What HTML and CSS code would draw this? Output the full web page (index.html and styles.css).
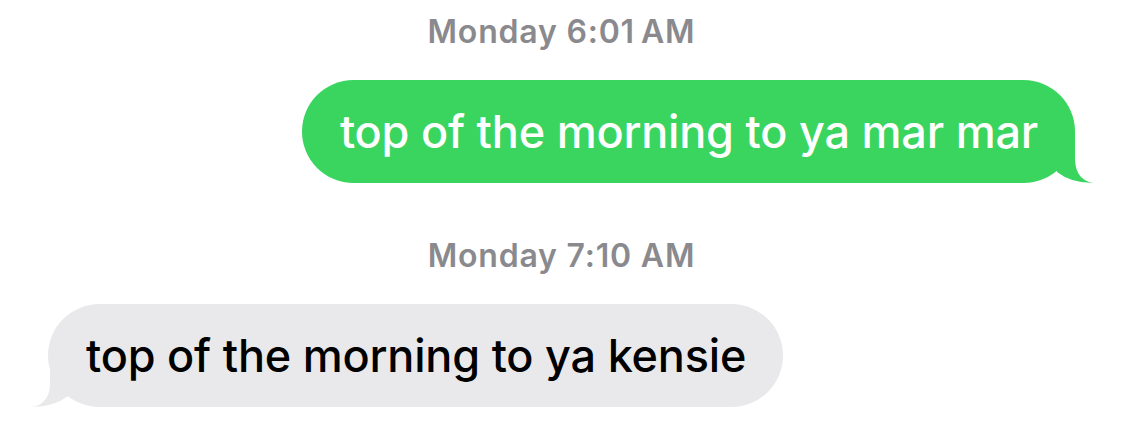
FILE: index.html
```html
<!DOCTYPE html>
<html lang="en">
  <head>
    <meta charset="UTF-8">
    <meta name="viewport" content="width=device-width, initial-scale=1.0">
    <title>Messages</title>
    <link rel="stylesheet" href="styles.css">
  </head>
  <body>
    <div class="thread">
      <div class="stamp">Monday 6:01&#8201;AM</div>
      <div class="row sent">
        <div class="bubble">top of the morning to ya mar mar</div>
      </div>
      <div class="stamp second">Monday 7:10 AM</div>
      <div class="row received">
        <div class="bubble">top of the morning to ya kensie</div>
      </div>
    </div>
  </body>
</html>
```

FILE: styles.css
```css
* {
  box-sizing: border-box;
  margin: 0;
  padding: 0;
}

html, body {
  height: 100%;
  background: #fff;
  overflow: hidden;
}

body {
  font-family: Inter, "Noto Sans", sans-serif;
}

.thread {
  display: flex;
  flex-direction: column;
  padding: 0 50px 0 48px;
}

.stamp {
  color: #8a8a8e;
  font-size: 32px;
  font-weight: 600;
  letter-spacing: 0.8px;
  text-align: center;
  line-height: 64px;
  height: 80px;
}

.stamp.second {
  margin-top: 42px;
  height: 79px;
  line-height: 32px;
  padding-top: 15px;
}

.row {
  display: flex;
}

.row.sent {
  justify-content: flex-end;
}

.bubble {
  position: relative;
  font-size: 45px;
  font-weight: 500;
  line-height: 51px;
  padding: 26px 37px 26px 38px;
  border-radius: 52px;
  letter-spacing: -0.2px;
}

.sent .bubble {
  background: #39d55f;
  color: #fff;
}

.received .bubble {
  background: #e9e9eb;
  color: #000;
}

/* tails */
.bubble::after {
  content: "";
  position: absolute;
  bottom: 0;
  width: 40px;
  height: 52px;
}

.sent .bubble::after {
  right: -18px;
  background: #39d55f;
  clip-path: path("M0 0 H22 V29 Q23 49 40 52 Q18 52 4 41 Z");
}

.received .bubble::after {
  left: -16px;
  background: #e9e9eb;
  clip-path: path("M40 0 H18 V30 Q17 49 0 52 Q22 52 36 41 Z");
}
```
